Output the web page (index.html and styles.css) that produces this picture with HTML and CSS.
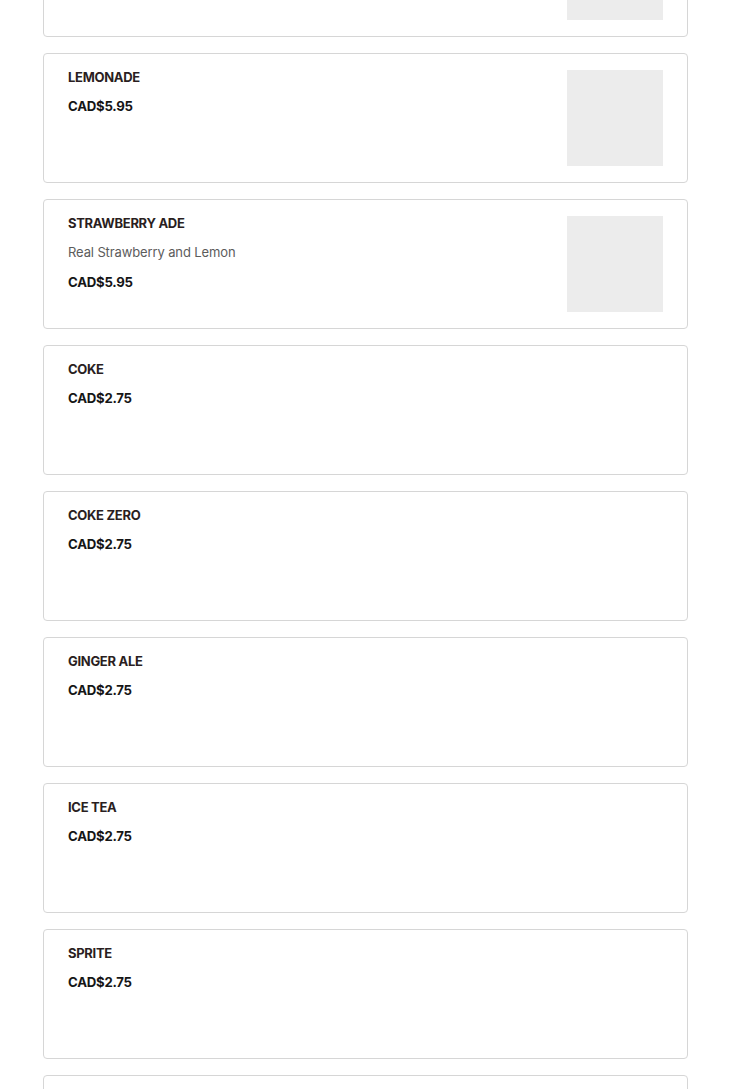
FILE: index.html
```html
<!DOCTYPE html>
<html lang="en">
<head>
<meta charset="utf-8">
<title>Menu - Drinks</title>
<link rel="stylesheet" href="styles.css">
</head>
<body>
<main class="menu">
  <div class="item">
    <div class="item-info">
      <div class="item-name">MANGO ADE</div>
      <div class="item-desc">Real Mango and Lemon</div>
      <div class="item-price">CAD$5.95</div>
    </div>
    <div class="item-thumb"></div>
  </div>
  <div class="item">
    <div class="item-info">
      <div class="item-name">LEMONADE</div>
      <div class="item-price">CAD$5.95</div>
    </div>
    <div class="item-thumb"></div>
  </div>
  <div class="item">
    <div class="item-info">
      <div class="item-name">STRAWBERRY ADE</div>
      <div class="item-desc">Real Strawberry and Lemon</div>
      <div class="item-price">CAD$5.95</div>
    </div>
    <div class="item-thumb"></div>
  </div>
  <div class="item">
    <div class="item-info">
      <div class="item-name">COKE</div>
      <div class="item-price">CAD$2.75</div>
    </div>
  </div>
  <div class="item">
    <div class="item-info">
      <div class="item-name">COKE ZERO</div>
      <div class="item-price">CAD$2.75</div>
    </div>
  </div>
  <div class="item">
    <div class="item-info">
      <div class="item-name">GINGER ALE</div>
      <div class="item-price">CAD$2.75</div>
    </div>
  </div>
  <div class="item">
    <div class="item-info">
      <div class="item-name">ICE TEA</div>
      <div class="item-price">CAD$2.75</div>
    </div>
  </div>
  <div class="item">
    <div class="item-info">
      <div class="item-name">SPRITE</div>
      <div class="item-price">CAD$2.75</div>
    </div>
  </div>
  <div class="item">
    <div class="item-info">
      <div class="item-name">WATER</div>
      <div class="item-price">CAD$1.75</div>
    </div>
  </div>
</main>
</body>
</html>
```
FILE: styles.css
```css
html, body {
  margin: 0;
  padding: 0;
  background: #ffffff;
}
body {
  font-family: "Inter", "Noto Sans", "Liberation Sans", sans-serif;
  overflow: hidden;
}
.menu {
  display: flex;
  flex-direction: column;
  gap: 16px;
  width: 645px;
  margin: -93px 0 0 43px;
}
.item {
  box-sizing: border-box;
  height: 130px;
  border: 1px solid #d6d6d6;
  border-radius: 4px;
  padding: 16px 24px;
  display: flex;
  justify-content: space-between;
  align-items: flex-start;
  gap: 16px;
}
.item-info {
  display: flex;
  flex-direction: column;
}
.item-name {
  font-size: 13px;
  line-height: 14px;
  font-weight: 700;
  color: #2a1e21;
  letter-spacing: -0.3px;
  margin-bottom: 12px;
}
.item-desc {
  font-size: 13px;
  line-height: 20px;
  color: #5c5c5c;
  letter-spacing: -0.12px;
  margin-bottom: 10px;
}
.item-price {
  font-size: 13.2px;
  line-height: 20px;
  font-weight: 700;
  color: #161616;
  letter-spacing: -0.25px;
}
.item-thumb {
  flex: none;
  width: 96px;
  height: 96px;
  background: #ececec;
}
```
